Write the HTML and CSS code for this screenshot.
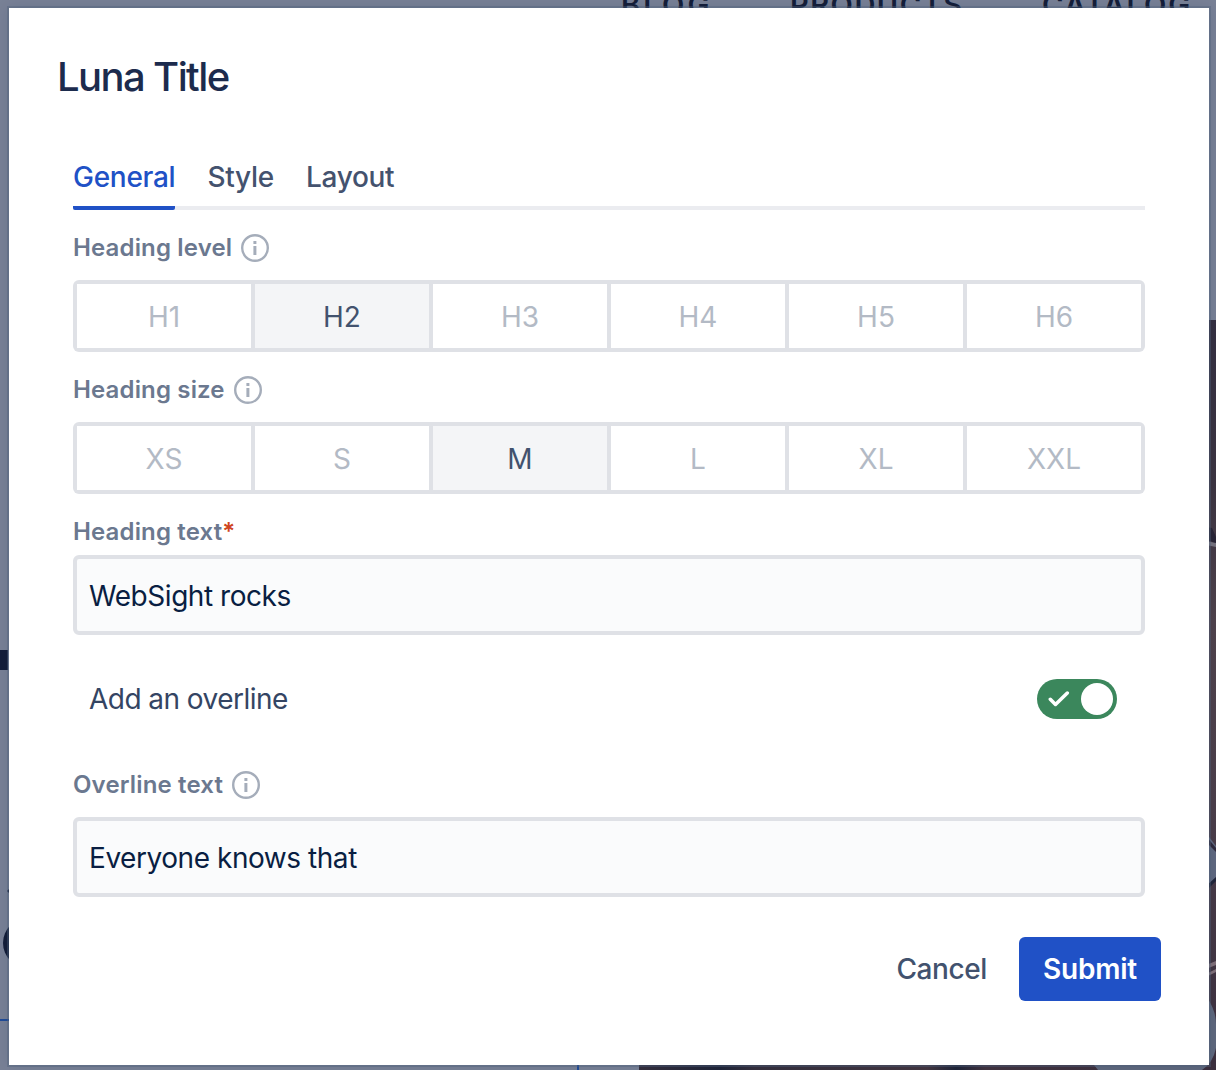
FILE: index.html
```html
<!DOCTYPE html>
<html lang="en">
<head>
<meta charset="utf-8">
<title>Luna Title</title>
<link rel="stylesheet" href="styles.css">
</head>
<body>
<div class="backdrop" aria-hidden="true">
  <svg class="scene" width="1216" height="1070" viewBox="0 0 1216 1070">
    <defs>
      <linearGradient id="photo" x1="0" y1="320" x2="0" y2="1070" gradientUnits="userSpaceOnUse">
        <stop offset="0" stop-color="#353041"/>
        <stop offset=".22" stop-color="#3d3541"/>
        <stop offset=".4" stop-color="#50434c"/>
        <stop offset=".65" stop-color="#4c3f4a"/>
        <stop offset="1" stop-color="#3c303e"/>
      </linearGradient>
      <linearGradient id="strip" x1="639" y1="0" x2="1216" y2="0" gradientUnits="userSpaceOnUse">
        <stop offset="0" stop-color="#352f3d"/>
        <stop offset=".14" stop-color="#1f2438"/>
        <stop offset=".2" stop-color="#352f3d"/>
        <stop offset=".5" stop-color="#443640"/>
        <stop offset=".55" stop-color="#1f2438"/>
        <stop offset=".6" stop-color="#42333f"/>
        <stop offset="1" stop-color="#3c303e"/>
      </linearGradient>
    </defs>
    <rect x="1200" y="320" width="16" height="750" fill="url(#photo)"/>
    <rect x="639" y="1060" width="577" height="10" fill="url(#strip)"/>
    <path d="M1206 527l6 1 4 9v8l-5-4-5 1z" fill="#292536"/>
    <path d="M1206 541l10 2v4l-10-2z" fill="#77747f"/>
    <path d="M1206 833l10 13v34l-10 10z" fill="#606980"/>
    <path d="M1206 836l10 12v4l-10-10z" fill="#302b3d"/>
    <path d="M1206 886l10-9v4l-10 10z" fill="#202539"/>
    <path d="M1206 965l10-4v4l-10 4zM1206 974l10-5v3l-10 5z" fill="#81717a"/>
    <path d="M1206 996q10 14 10 28v24q-3 15-14 22h-104l-4-5h112z" fill="#5f687d"/>
    <path d="M0 650h8v20H0z" fill="#141e39"/>
    <circle cx="28" cy="943" r="25" fill="#141e39"/>
    <path d="M7 891l2-2v4z" fill="#141e39"/>
    <path d="M0 1020h9M578 1060v10" stroke="#204c98" stroke-width="2"/>
  </svg>
  <span class="nav-link nav-blog">BLOG</span>
  <span class="nav-link nav-products">PRODUCTS</span>
  <span class="nav-link nav-catalog">CATALOG</span>
</div>

<main class="dialog" role="dialog" aria-labelledby="title">
  <h1 class="title" id="title">Luna Title</h1>
  <form class="form">
    <nav class="tabs">
      <a class="tab tab-active">General</a>
      <a class="tab">Style</a>
      <a class="tab">Layout</a>
    </nav>

    <div class="label"><span>Heading level</span>
      <svg class="info" viewBox="0 0 28 28"><circle cx="14" cy="14" r="12.8"/><path d="M12.4 7h3v3h-3zM12.4 12h3v9h-3z"/></svg>
    </div>
    <div class="segments">
      <span class="segment">H1</span><span class="segment selected">H2</span><span class="segment">H3</span><span class="segment">H4</span><span class="segment">H5</span><span class="segment">H6</span>
    </div>

    <div class="label"><span>Heading size</span>
      <svg class="info" viewBox="0 0 28 28"><circle cx="14" cy="14" r="12.8"/><path d="M12.4 7h3v3h-3zM12.4 12h3v9h-3z"/></svg>
    </div>
    <div class="segments">
      <span class="segment">XS</span><span class="segment">S</span><span class="segment selected">M</span><span class="segment">L</span><span class="segment">XL</span><span class="segment">XXL</span>
    </div>

    <div class="label label-input"><span>Heading text</span><span class="required">*</span></div>
    <div class="input">WebSight rocks</div>

    <div class="switch-row">
      <span class="switch-label">Add an overline</span>
      <span class="switch">
        <svg class="check" viewBox="0 0 22 18"><path d="M2.3 9.3l5.2 5.2L19.3 3"/></svg>
        <span class="knob"></span>
      </span>
    </div>

    <div class="label label-overline"><span>Overline text</span>
      <svg class="info" viewBox="0 0 28 28"><circle cx="14" cy="14" r="12.8"/><path d="M12.4 7h3v3h-3zM12.4 12h3v9h-3z"/></svg>
    </div>
    <div class="input">Everyone knows that</div>
  </form>
  <footer class="actions">
    <span class="cancel">Cancel</span>
    <span class="submit">Submit</span>
  </footer>
</main>
</body>
</html>
```

FILE: styles.css
```css
* { box-sizing: border-box; }

body {
  margin: 0;
  width: 1216px;
  height: 1070px;
  overflow: hidden;
  padding: 8px 7px 5px 9px;
  background: #788196;
  font-family: Inter, "Liberation Sans", sans-serif;
  font-size: 28px;
  line-height: 40px;
}

.backdrop {
  position: absolute;
  inset: 0;
  overflow: hidden;
}

.scene { display: block; }

.nav-link {
  position: absolute;
  top: -13px;
  color: #141e39;
  font-size: 29px;
  font-weight: 600;
  line-height: 36px;
}

.nav-blog { left: 621px; letter-spacing: 3.2px; }
.nav-products { left: 790px; letter-spacing: 1.5px; }
.nav-catalog { left: 1042px; letter-spacing: 1.9px; }

.dialog {
  position: relative;
  display: flex;
  flex-direction: column;
  height: 1057px;
  padding: 47px 48px 64px;
  background: #fff;
  box-shadow: 0 0 0 2px rgba(80, 98, 122, .4), 0 0 14px rgba(9, 30, 66, .13);
}

.title {
  margin: 0;
  color: #1c2b4d;
  font-size: 40px;
  font-weight: 550;
  line-height: 44px;
  letter-spacing: -1.6px;
}

.form { padding: 51px 16px 0; }

.tabs {
  display: flex;
  gap: 32px;
  height: 60px;
  margin-bottom: 20px;
  border-bottom: 4px solid #ebecf0;
}

.tab {
  height: 60px;
  padding-top: 7px;
  color: #44526e;
  font-weight: 550;
  letter-spacing: -.28px;
}

.tab-active {
  color: #2051c6;
  background: linear-gradient(#2051c6, #2051c6) bottom / 100% 4px no-repeat;
  border-radius: 2px;
}

.label {
  display: flex;
  align-items: center;
  gap: 9px;
  height: 36px;
  margin-bottom: 14px;
  color: #6b788f;
  font-size: 24px;
  font-weight: 600;
  line-height: 36px;
  letter-spacing: .15px;
}

.label-input { gap: 0; margin-bottom: 5px; }
.required { color: #cf4420; }
.label-overline { margin-top: 48px; }

.info { width: 28px; height: 28px; fill: #a5adba; }
.info circle { fill: none; stroke: #a5adba; stroke-width: 2.4; }

.segments {
  display: grid;
  grid-template-columns: repeat(6, 174px);
  gap: 4px;
  height: 72px;
  margin-bottom: 20px;
  padding: 4px;
  background: #dfe1e6;
  border-radius: 6px;
}

.segment {
  padding-top: 2px;
  background: #fff;
  color: #b3bac5;
  line-height: 62px;
  text-align: center;
}

.selected { background: #f4f5f7; color: #42526e; }

.input {
  height: 80px;
  padding: 0 12px;
  border: 4px solid #dfe1e6;
  border-radius: 6px;
  background: #fafbfc;
  color: #091e42;
  line-height: 74px;
  letter-spacing: -.45px;
}

.switch-row {
  display: flex;
  justify-content: space-between;
  align-items: center;
  height: 40px;
  margin-top: 44px;
  padding: 0 28px 0 16px;
  color: #344563;
}

.switch-label { letter-spacing: -.54px; }

.switch {
  display: flex;
  justify-content: space-between;
  align-items: center;
  width: 80px;
  height: 40px;
  padding: 0 4px 0 11px;
  border-radius: 20px;
  background: #3b875c;
}

.check { width: 22px; height: 18px; fill: none; stroke: #fff; stroke-width: 3.5; stroke-linecap: round; stroke-linejoin: round; }
.knob { width: 32px; height: 32px; border-radius: 50%; background: #fff; }

.actions {
  display: flex;
  justify-content: flex-end;
  align-items: center;
  gap: 32px;
  margin-top: 40px;
  font-weight: 600;
}

.cancel { color: #42526e; font-weight: 550; letter-spacing: -.4px; }

.submit {
  width: 142px;
  height: 64px;
  border-radius: 6px;
  background: #2051c6;
  color: #fff;
  line-height: 64px;
  letter-spacing: -.2px;
  text-align: center;
}
```
